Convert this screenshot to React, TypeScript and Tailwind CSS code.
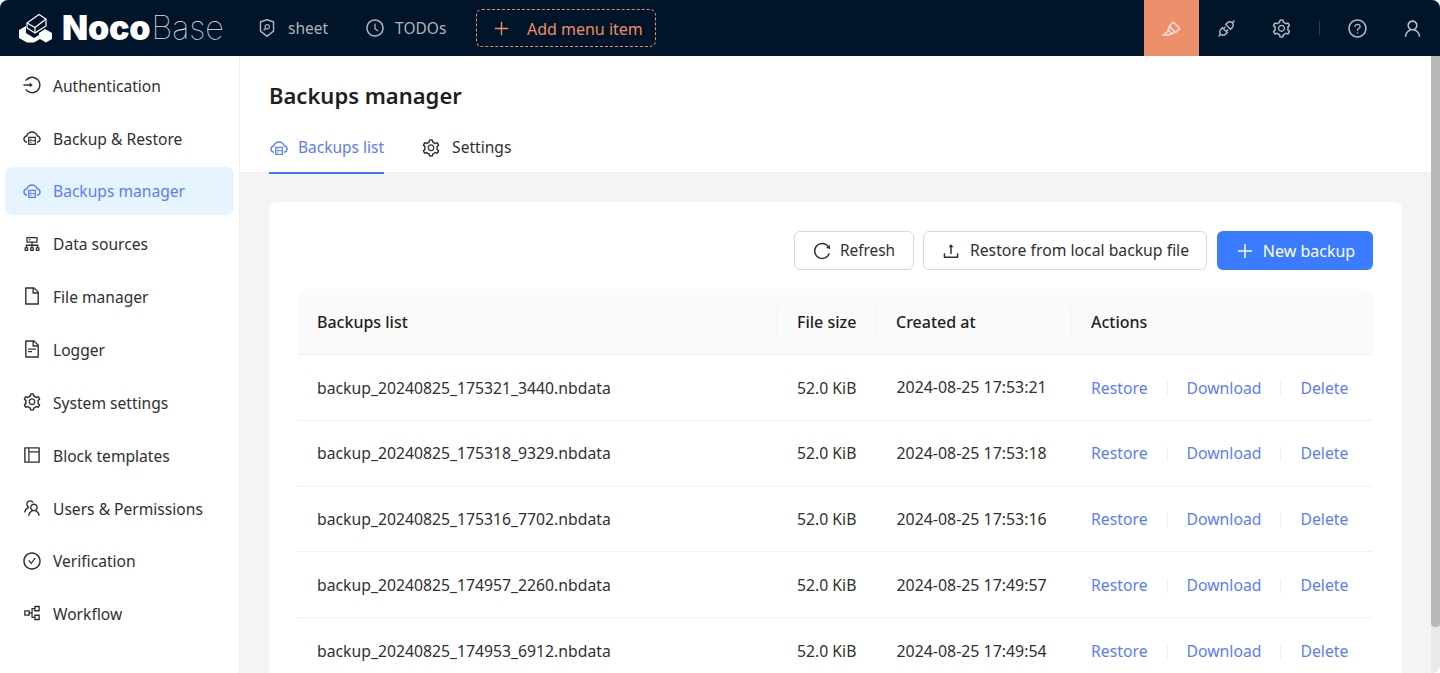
import { ReactNode } from 'react';
import {
  AiOutlineApi,
  AiOutlineCheckCircle,
  AiOutlineClockCircle,
  AiOutlineCloudServer,
  AiOutlineCluster,
  AiOutlineFile,
  AiOutlineFileText,
  AiOutlineHighlight,
  AiOutlineLayout,
  AiOutlineLogin,
  AiOutlinePartition,
  AiOutlinePlus,
  AiOutlineQuestionCircle,
  AiOutlineReload,
  AiOutlineSecurityScan,
  AiOutlineSetting,
  AiOutlineTeam,
  AiOutlineUpload,
  AiOutlineUser,
} from 'react-icons/ai';

const sideItems = [
  { label: 'Authentication', icon: AiOutlineLogin },
  { label: 'Backup & Restore', icon: AiOutlineCloudServer },
  { label: 'Backups manager', icon: AiOutlineCloudServer, active: true },
  { label: 'Data sources', icon: AiOutlineCluster },
  { label: 'File manager', icon: AiOutlineFile },
  { label: 'Logger', icon: AiOutlineFileText },
  { label: 'System settings', icon: AiOutlineSetting },
  { label: 'Block templates', icon: AiOutlineLayout },
  { label: 'Users & Permissions', icon: AiOutlineTeam },
  { label: 'Verification', icon: AiOutlineCheckCircle },
  { label: 'Workflow', icon: AiOutlinePartition },
];

const rows = [
  ['backup_20240825_175321_3440.nbdata', '2024-08-25 17:53:21'],
  ['backup_20240825_175318_9329.nbdata', '2024-08-25 17:53:18'],
  ['backup_20240825_175316_7702.nbdata', '2024-08-25 17:53:16'],
  ['backup_20240825_174957_2260.nbdata', '2024-08-25 17:49:57'],
  ['backup_20240825_174953_6912.nbdata', '2024-08-25 17:49:54'],
];

function Logo() {
  return (
    <div className="flex items-center">
      <svg width="35" height="30" viewBox="0 0 35 30" className="mr-[9px]">
        <path d="M1 17 L8 13 L8 20 L16 25 L21 22 L21 20 L27 16 L34 20 L34 26 L28 29.5 L22 26 L16 29.5 L9 29.5 L1 25 Z" fill="#fff" />
        <path d="M9 10 L21 1.5 L28 6 L28 13 L17 20 L9 15 Z" fill="none" stroke="#fff" strokeWidth="1.2" />
        <path d="M9 10 L17 14.5 L28 6 M17 14.5 L17 20" fill="none" stroke="#fff" strokeWidth="1.2" />
      </svg>
      <span className="text-[34px] leading-none font-black text-white font-['Inter'] tracking-[-0.2px]">Noco</span>
      <span className="text-[32.5px] leading-none font-thin text-[#e2e5e8] font-['Inter'] ml-[1px]">Base</span>
    </div>
  );
}

function NavIcon({ children, active }: { children: ReactNode; active?: boolean }) {
  return (
    <div className={`h-[56px] w-[55px] flex items-center justify-center text-[21px] ${active ? 'bg-[#ec8f6a] text-[#fbe4da]' : 'text-[#b4bac1]'}`}>
      {children}
    </div>
  );
}

function Header() {
  return (
    <div className="h-[56px] shrink-0 bg-[#001529] flex items-center text-[15.5px]">
      <div className="pl-[18px] w-[257px] shrink-0">
        <Logo />
      </div>
      <div className="flex items-center gap-[11px] text-[#aeb4ba]">
        <AiOutlineSecurityScan className="text-[20px]" />
        <span className="pt-[2px]">sheet</span>
      </div>
      <div className="flex items-center gap-[10px] text-[#aeb4ba] ml-[37px]">
        <AiOutlineClockCircle className="text-[20px]" />
        <span className="pt-[2px]">TODOs</span>
      </div>
      <div className="ml-[30px] w-[180px] h-[38px] border border-dashed border-[#f18b62] rounded-[6px] flex items-center justify-center gap-[16px] pl-[2px] text-[#f18b62] text-[16px]">
        <AiOutlinePlus className="text-[19px]" />
        <span className="pt-[2px]">Add menu item</span>
      </div>
      <div className="ml-auto flex items-center pr-[0.5px]">
        <NavIcon active>
          <AiOutlineHighlight />
        </NavIcon>
        <NavIcon>
          <AiOutlineApi />
        </NavIcon>
        <NavIcon>
          <AiOutlineSetting />
        </NavIcon>
        <div className="w-px h-[14px] bg-[#2a3b4c] mx-[10px]" />
        <NavIcon>
          <AiOutlineQuestionCircle />
        </NavIcon>
        <NavIcon>
          <AiOutlineUser />
        </NavIcon>
      </div>
    </div>
  );
}

function Sidebar() {
  return (
    <div className="w-[240px] shrink-0 bg-white border-r border-[#f0f0f0] pt-[5px] px-[5px]">
      {sideItems.map((item) => (
        <div
          key={item.label}
          className={`h-[48px] mb-[4.85px] rounded-[8px] flex items-center pl-[17px] gap-[11px] text-[15.6px] ${item.active ? 'bg-[#e6f4ff] text-[#5b7cfa]' : 'text-[#303030]'}`}
        >
          <item.icon className="text-[20px]" />
          <span className="pt-[3px]">{item.label}</span>
        </div>
      ))}
    </div>
  );
}

function LinkCell({ children }: { children: ReactNode }) {
  return <span className="text-[#5b7cfa]">{children}</span>;
}

function Sep() {
  return <span className="w-px h-[14px] bg-[#f0f0f0] mx-[19px]" />;
}

function BackupTable() {
  return (
    <div>
      <div className="h-[66px] bg-[#fafafa] rounded-t-[8px] border-b border-[#f0f0f0] flex items-center font-medium text-[#1f1f1f]">
        <div className="w-[480px] pl-[19px] border-r border-[#f0f0f0] h-[28px] flex items-center">Backups list</div>
        <div className="w-[99px] pl-[19px] border-r border-[#f0f0f0] h-[28px] flex items-center">File size</div>
        <div className="w-[194px] pl-[19px] border-r border-[#f0f0f0] h-[28px] flex items-center">Created at</div>
        <div className="pl-[20px]">Actions</div>
      </div>
      {rows.map((row) => (
        <div key={row[0]} className="h-[65.8px] pt-[2px] border-b border-[#f0f0f0] flex items-center text-[#303030]">
          <div className="w-[480px] pl-[19px] text-[15.75px]">{row[0]}</div>
          <div className="w-[99px] pl-[19px] text-[15.75px]">52.0 KiB</div>
          <div className="w-[194px] pl-[19.5px] text-[15.9px]">{row[1]}</div>
          <div className="pl-[20px] flex items-center text-[15.75px]">
            <LinkCell>Restore</LinkCell>
            <Sep />
            <LinkCell>Download</LinkCell>
            <Sep />
            <LinkCell>Delete</LinkCell>
          </div>
        </div>
      ))}
    </div>
  );
}

export default function App() {
  return (
    <div className="h-[673px] w-[1440px] overflow-hidden flex flex-col bg-white text-[16px] font-['Noto_Sans','Liberation_Sans',sans-serif] rounded-[8px]">
      <Header />
      <div className="flex flex-1 min-h-0">
        <Sidebar />
        <div className="flex-1 min-w-0 flex flex-col bg-[#f4f4f4]">
          <div className="bg-white h-[117px] shrink-0 pl-[29px] border-b border-[#f0f0f0]">
            <h1 className="text-[22px] font-semibold text-[#1f1f1f] pt-[21px] leading-[36px]">Backups manager</h1>
            <div className="flex mt-[15px] gap-[37px]">
              <div className="h-[46px] pb-[4px] flex items-center gap-[9px] text-[#5b7cfa] border-b-2 border-[#3b7bff] text-[15.5px]">
                <AiOutlineCloudServer className="text-[20px]" />
                <span>Backups list</span>
              </div>
              <div className="h-[46px] pb-[6px] flex items-center gap-[11px] text-[#303030] text-[15.6px]">
                <AiOutlineSetting className="text-[20px]" />
                <span>Settings</span>
              </div>
            </div>
          </div>
          <div className="flex-1 min-h-0 pt-[29px] pl-[29px] pr-[29px]">
            <div className="bg-white rounded-[8px] px-[29px] pt-[29px] h-[600px]">
              <div className="flex justify-end gap-[9px] mb-[19px]">
                <div className="h-[39px] w-[120px] pt-[1px] pr-[1px] rounded-[6px] border border-[#d9d9d9] flex items-center justify-center gap-[8px] text-[#303030] text-[15.4px]">
                  <AiOutlineReload className="text-[20px]" />
                  Refresh
                </div>
                <div className="h-[39px] w-[284px] pt-[1px] rounded-[6px] border border-[#d9d9d9] flex items-center justify-center gap-[9px] text-[#303030] text-[15.75px]">
                  <AiOutlineUpload className="text-[20px]" />
                  Restore from local backup file
                </div>
                <div className="h-[39px] w-[156px] ml-[1px] rounded-[6px] bg-[#3b7bff] flex items-center justify-center gap-[8px] text-white">
                  <AiOutlinePlus className="text-[20px]" />
                  New backup
                </div>
              </div>
              <BackupTable />
            </div>
          </div>
        </div>
        <div className="w-[9px] shrink-0 bg-[#e9e9e9] flex flex-col">
          <div className="h-[571px] bg-[#b9b9b9] rounded-b-[4px]" />
        </div>
      </div>
    </div>
  );
}
